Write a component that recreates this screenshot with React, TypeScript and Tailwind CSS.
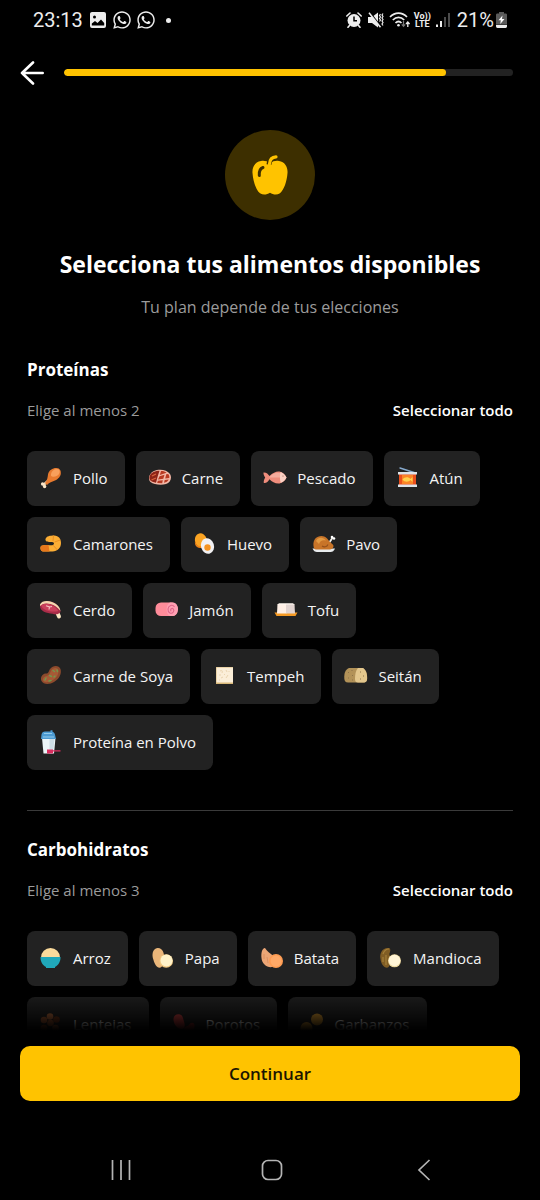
import type { ReactNode } from "react";
import { FaWhatsapp } from "react-icons/fa";

type Food = { name: string; icon: ReactNode };

const proteins: Food[] = [
  {
    name: "Pollo",
    icon: (
      <>
        <path d="M9 15 5 18.500" stroke="#f3d9b8" strokeWidth="2.600" strokeLinecap="round" />
        <circle cx="3.600" cy="18" r="1.700" fill="#fbe6c8" />
        <circle cx="5.600" cy="20.500" r="1.700" fill="#fbe6c8" />
        <path d="M6 17C8.500 14 8.500 11.500 9 8.500 9.800 4 14 1.800 17.500 2c3.500.2 4.800 3 4.300 6-.6 3.400-3.800 5.800-7 7-2.500.9-4.800 1.900-6.800 4z" fill="#e87b2f" />
        <path d="M12 8c.5-3 3-5 6-5 2.500 0 3.200 2 2.500 4-1 2.600-3.500 3.500-6 3.800-2 .2-2.900-1-2.500-2.800z" fill="#f8a05c" />
      </>
    ),
  },
  {
    name: "Carne",
    icon: (
      <>
        <path d="M6 5c5-2.500 13-1.500 16 3 2.300 3.800.5 8.500-4 10-4.500 1.300-12 .8-15.500-2C-.5 13 1 7.300 6 5z" fill="#f3b7a6" />
        <path d="M5.500 6c2-1 4-1.300 6-1.300L9.800 10 8 16.700c-2.500-.4-5-1.200-6-2.700C.5 11.300 2 7.700 5.500 6z" fill="#8f2417" />
        <path d="M13 5c2-.2 4 .5 5.500 1.700L11.800 9zM11.500 10.300l5-1.600-1.200 4-5.300.8zM9.800 14.800l5-.6-.6 3-5-.2zM18.200 8.200l2-.3c1 1.300 1.400 2.600 1 4.200l-4 .4zM16.700 13.900l4-.4c-1 1.800-2.300 2.900-4.700 3.300z" fill="#b93a22" />
        <path d="m4 10 4-2M3.500 14 8 12" stroke="#d9653f" strokeWidth="1.200" />
      </>
    ),
  },
  {
    name: "Pescado",
    icon: (
      <>
        <path d="M.5 6.500c3-.2 4.500 1.500 6 3.500C10 6.500 13.500 5 16.500 5.500c3 .5 5.500 3 7 6C22 15 18.500 17.500 15.500 17.500c-3.700 0-6.700-1.700-9-4.200-1.500 2.500-3 4-5.700 3.700-.3-2 .5-3.700 1.400-5.400C1.300 10 .3 8.500.5 6.500z" fill="#ef8d7c" />
        <path d="M6 11.500h17C20 8 17 6.500 14 6.700c-3 .1-6 2-8 4.800z" fill="#f6ad9e" />
        <path d="M17.500 6c3 1 4.700 3 6 5.500-1.200 2.400-3 4.400-5.800 5.200-1-3.500-1-7.200-.2-10.700z" fill="#fbd0c3" />
        <circle cx="20" cy="10" r=".6" fill="#8d6257" />
      </>
    ),
  },
  {
    name: "Atún",
    icon: (
      <>
        <path d="m4 2 14 4.500" stroke="#87aacd" strokeWidth="1.400" strokeLinecap="round" />
        <path d="M3 7h17v13H3z" fill="#ea4f1d" />
        <path d="M6 9h11v9H6z" fill="#fb8426" />
        <path d="M6.500 13.500c2-3 6-3 8-.6l2-1.800v4.800l-2-1.800c-2 2.300-6 2.300-8-.6z" fill="#ffd14d" />
        <path d="M2 6h19v2.500H2zM2 18.500h19V21H2z" fill="#dce3e9" />
      </>
    ),
  },
  {
    name: "Camarones",
    icon: (
      <>
        <path d="M6.500 7C7.500 4 11 3.500 15 3.500c5 .2 7 3.500 7 7.500 0 5-3.500 8.300-8.500 8.500H4c-2.500 0-3.500-4.500-1.500-5.700 2.500-1.300 5-.8 8.500-.5 2.500.3 4-.5 4-1.800 0-1.200-1.500-1.500-3.500-1.500-2.500.1-5.500-.5-5-3z" fill="#fcae35" />
        <path d="M2.500 13.800c2-1 4.500-.9 7-.7l1 6.400H4c-2.500 0-3.500-4.500-1.500-5.700z" fill="#e8771b" />
        <path d="M14.500 3.500 14 9M21.300 8l-5.700 2M18.500 18 14 13.200" stroke="#e88b20" strokeWidth=".9" />
      </>
    ),
  },
  {
    name: "Huevo",
    icon: (
      <>
        <ellipse cx="8" cy="8.500" rx="6" ry="7.300" fill="#fba423" transform="rotate(-15 8 8.500)" />
        <path d="M2 9c1 4 4 6 8 5.500-1 2-4 2-6 .5s-2.300-4-2-6z" fill="#ef8218" />
        <ellipse cx="14.500" cy="14" rx="6.500" ry="7.800" fill="#f1f0f2" transform="rotate(-18 14.500 14)" />
        <circle cx="14.500" cy="15.500" r="3.200" fill="#f59321" />
      </>
    ),
  },
  {
    name: "Pavo",
    icon: (
      <>
        <path d="M.5 16.500h22.500c-1 2.500-2.500 3.500-4.500 3.500H5c-2 0-3.500-1-4.500-3.500z" fill="#e8ebed" />
        <path d="m17 11 4-6" stroke="#f2efe9" strokeWidth="1.800" />
        <circle cx="20" cy="5" r="1.300" fill="#fff" />
        <circle cx="22" cy="6.500" r="1.300" fill="#fff" />
        <path d="M1.500 14C.8 7.500 4.500 4 9.500 4c4 .2 6 2.500 8 5.500l3.500 3.300c1.500 2-.5 4.700-3 4.700H4c-1.500 0-2.300-1.500-2.500-3.500z" fill="#c87428" />
        <path d="M4 9c2-4 7-4.500 10-.5-3.500-1-6 .2-7 3.500z" fill="#e29a43" />
        <path d="M10 14c2 1.500 5 1 6-1.500" stroke="#95501c" strokeWidth="1.100" />
      </>
    ),
  },
  {
    name: "Cerdo",
    icon: (
      <>
        <path d="m18 14 2 4.500" stroke="#fae7c4" strokeWidth="4" strokeLinecap="round" />
        <path d="M1 7c1.500-4 8-5 13.500-2.500 4 1.800 7 5.500 7 9.500-2 2.800-5 2.700-8 1.800C8 14.800.5 14 1 7z" fill="#a82c48" />
        <path d="M1 6.500C2.500 3 8 2.200 13 4c4.500 1.500 8 5 8.500 9-3-3.500-6-6-10-7C7.500 5 4 5.200 1 8z" fill="#f3d8b0" />
        <path d="M2 7.500c3-2.300 7-2 10.500-.5 3.500 1.500 5.300 3.800 7 6-6 1.500-15 .5-17.500-5.500z" fill="#c9405b" />
        <path d="M7 7.800 10.500 9 10 11.500M10.500 9l2.500-.5" stroke="#f7c0c0" strokeWidth="1.200" />
      </>
    ),
  },
  {
    name: "Jamón",
    icon: (
      <>
        <rect x=".5" y="4.500" width="22" height="13.500" rx="5.500" fill="#ff8c9a" />
        <path d="M15 4.500h3a5 6.700 0 0 1 0 13.500h-3c-4.500-2-4.500-11.500 0-13.500z" fill="#ff9fb2" />
        <path d="M19.500 9c-2-3-6-1.700-6.500 2-.3 4 3.500 5.500 5.300 3 1.400-2-.3-4.300-2-3.300-1 .7-.8 2 0 2.500" stroke="#df6688" strokeWidth="1.100" />
      </>
    ),
  },
  {
    name: "Tofu",
    icon: (
      <>
        <path d="M.5 14.500h23L21.500 18h-19z" fill="#f59a24" />
        <path d="M3.500 6h9v9.500H3z" fill="#fff0e6" />
        <path d="M12 6h8.500l.5 9.500h-9z" fill="#e2d4d0" />
        <path d="M3.500 6.500 5 5.200h14l1.500 1.300z" fill="#fff8f1" />
      </>
    ),
  },
  {
    name: "Carne de Soya",
    icon: (
      <>
        <path d="M11 5c3-4 9-4 10.500 0 1.500 5-1.500 10-6.500 13-4 2.500-10.500 3-12.500-1-1.500-3.500.5-7 4-7.500 3 .5 3-2 4.500-4.500z" fill="#8d4a2c" />
        <path d="M13.500 5c2.500-2 6-1 6 2 0 4-2.500 7.500-6.500 9.500-3.500 2-8 2.500-9 0-.7-2 1-4 3.500-4.500 4-.7 3.500-5 6-7z" fill="#a75a36" />
        <path d="m14 6.500 1.500 1M10.500 11.500l2 1M7 14l-1 2M15 13l1-1M18 6l.5 1.500M10 17l2-.5" stroke="#71974b" strokeWidth="1.500" strokeLinecap="round" />
      </>
    ),
  },
  {
    name: "Tempeh",
    icon: (
      <>
        <path d="M3 3h17v17H3z" fill="#d9b878" />
        <path d="M3.500 3.500H20V18.500H3.500z" fill="#fbeed8" />
        <path d="M7 7c2-1 3 0 2 2M13 6l1 2M15 11l-2 3M8 14l2-1M6 11h2M11 10l1 1M6 16h1M16 7v1" stroke="#ead4b0" strokeWidth="1" />
      </>
    ),
  },
  {
    name: "Seitán",
    icon: (
      <>
        <path d="M5 4h14c3.500 2.500 4.500 7 4 12-.5 2-2 2.500-4 2.500H4c-2.500 0-3.500-1.500-3.700-4C0 10 1 5.500 5 4z" fill="#b29258" />
        <path d="M14 4h5c3.500 2.500 4.500 7 4 12-.5 2-2 2.500-4 2.500h-5c-2 0-3-1-3-3.500 0-4 .5-8.500 3-11z" fill="#e3c78d" />
        <path d="m4 8 1 1M8 6v1M8 11l1 1M4 14h1M8 16h1M16 8h1M19 12h1M16 15h1" stroke="#8d7349" strokeWidth="1" />
      </>
    ),
  },
  {
    name: "Proteína en Polvo",
    icon: (
      <>
        <path d="M3 8h13.500l-1.500 15.500H4.500z" fill="#edf5f8" />
        <path d="M10.500 9h5l-1.500 14.500h-3.500z" fill="#cddde5" />
        <path d="M2.500 4.500C3 2.500 4 1.500 6 1.500h5.500V.2h2v1.500c1.500.5 2.300 1.500 2.500 3L17 9H2z" fill="#4c9bd3" />
        <path d="M5 3.500h8M4 7h11" stroke="#92caeb" strokeWidth="1" />
        <path d="M8 19.500h6v.7h7.500v1.400H14v2H8z" fill="#dc2e60" />
      </>
    ),
  },
];

const carbs: Food[] = [
  {
    name: "Arroz",
    icon: (
      <>
        <path d="M2 11.500a9.500 9.500 0 0 1 19 0z" fill="#fbdb9c" />
        <path d="M1.500 11h20c.2 4.500-2 8-5.500 10v1H7v-1c-3.500-2-5.700-5.500-5.500-10z" fill="#20a8ba" />
      </>
    ),
  },
  {
    name: "Papa",
    icon: (
      <>
        <path d="M2.500 14C.5 9 1.500 2.500 6.500 2c5-.4 7 5 6.500 10 0 4.500-1 9.500-4.500 9.700-3 0-5-4-6-7.700z" fill="#eab67a" />
        <circle cx="15.200" cy="15" r="6.800" fill="#f1c880" />
        <circle cx="15.500" cy="14.500" r="6" fill="#fff2c9" />
      </>
    ),
  },
  {
    name: "Batata",
    icon: (
      <>
        <path d="M1.500 12C1 7 2 2.500 5 2c2 3.500 5 5 8.500 8l-1 11C7 22 2 18 1.500 12z" fill="#eca676" />
        <path d="M4 8v5M7 11l1 6" stroke="#d98b5c" strokeWidth=".8" />
        <circle cx="16" cy="15" r="7" fill="#ff9c52" />
        <circle cx="16" cy="15" r="5.500" fill="#ffa967" />
      </>
    ),
  },
  {
    name: "Mandioca",
    icon: (
      <>
        <path d="M1.500 13C0 7 4 1 10 2c2 .5 1.300 4 .3 6 2 5 1.700 13-2.300 13.800-3.500-.5-6-4-6.500-8.800z" fill="#805d24" />
        <path d="M4 8c1-3 3-5 6-5M4 11v5M7 9v10" stroke="#a5803a" strokeWidth="1.200" />
        <circle cx="15.500" cy="14.800" r="6.500" fill="#e9d49a" />
        <circle cx="15.500" cy="14.500" r="5.800" fill="#fff4d6" />
      </>
    ),
  },
  {
    name: "Lentejas",
    icon: (
      <>
        <circle cx="11" cy="4.500" r="3.300" fill="#a76239" />
        <circle cx="5" cy="8" r="3.300" fill="#9d5630" />
        <circle cx="17.500" cy="7.500" r="3.300" fill="#6c3319" />
        <circle cx="11.500" cy="11" r="3.300" fill="#8f4d2a" />
        <circle cx="5" cy="16" r="3.300" fill="#84401f" />
        <circle cx="16.500" cy="16" r="3.300" fill="#9d5630" />
      </>
    ),
  },
  {
    name: "Porotos",
    icon: (
      <>
        <path d="M1.500 8C1 4 4 1.500 8 2.500c3 1 3 4 4 7s1.500 7-2 7.500C6 17.500 2 13 1.500 8z" fill="#b83b3b" />
        <path d="M12 17c0-3 3-2 5-4 1.500-3 5-3 5.500 0 .5 4-2.500 8-6 8.500-2.500.3-4.500-1.500-4.500-4.500z" fill="#8f2626" />
      </>
    ),
  },
  {
    name: "Garbanzos",
    icon: (
      <>
        <circle cx="17" cy="7.500" r="6" fill="#c98f2c" />
        <circle cx="6.500" cy="16" r="6" fill="#c98f2c" />
      </>
    ),
  },
];

function StatusBar() {
  return (
    <div className="flex h-10 shrink-0 items-center justify-between pr-[33px] pl-[33px] font-['Roboto',sans-serif] text-[20px] text-[#ededed]">
      <div className="flex items-center">
        <span>23:13</span>
        <svg viewBox="0 0 16 16" className="ml-[7px] size-4" aria-hidden="true">
          <path fillRule="evenodd" d="M2 0h12a2 2 0 0 1 2 2v12a2 2 0 0 1-2 2H2a2 2 0 0 1-2-2V2C0 .9.900 0 2 0zM4.500 3.500a1.500 1.500 0 1 0 0 3 1.500 1.500 0 0 0 0-3zM1.800 13.500h12.400V11L11 7.500 7.500 11 5 9l-3.200 2.500z" fill="#ededed" />
        </svg>
        <FaWhatsapp className="ml-1.5 size-5" />
        <FaWhatsapp className="ml-1 size-5" />
        <span className="ml-2.5 size-[5px] rounded-full bg-[#ededed]" />
      </div>
      <div className="flex items-center">
        <svg viewBox="0 0 16 16" className="size-4" aria-hidden="true">
          <circle cx="8" cy="8.500" r="6.500" fill="#ededed" />
          <path d="M.8 4 4 1M15.200 4 12 1M3.500 13.500 2 15.300M12.500 13.500l1.500 1.800" stroke="#ededed" strokeWidth="1.600" strokeLinecap="round" />
          <path d="M8 4.500v4.300h3" stroke="#000" strokeWidth="1.500" fill="none" />
        </svg>
        <svg viewBox="0 0 16 16" className="ml-1.5 size-4" aria-hidden="true">
          <path d="M0 5h4l6-4.500v15L4 11H0z" fill="#ededed" />
          <path d="M2 .500 13.500 15.500" stroke="#000" strokeWidth="1.500" />
          <path d="M1 .800 12.500 15.300" stroke="#ededed" strokeWidth="1.500" />
          <path d="m12.500 2-1 1.500 1 1.500-1 1.500 1 1.500-1 1.500M15 1.500l-1 1.500 1 1.500-1 1.500 1 1.500-1 1.500 1 1.500-1 1.500 1 1.500" stroke="#ededed" strokeWidth="1.200" fill="none" />
        </svg>
        <svg viewBox="0 0 21 16" className="ml-[5px] h-4 w-[21px]" fill="none" aria-hidden="true">
          <path d="M1 5C6-.2 13-.2 18 5M3.800 8c3.500-3.500 8-3.500 11.400 0M6.500 11c2-2 4-2 6 0" stroke="#ededed" strokeWidth="1.700" />
          <circle cx="9.500" cy="13.300" r="1.300" fill="#ededed" />
          <path d="M14.500 9v5M12.800 12.300l1.700 2 1.700-2" stroke="#777" strokeWidth="1.200" />
          <path d="M18.800 15v-5M17 12l1.800-2 1.800 2" stroke="#ededed" strokeWidth="1.300" />
        </svg>
        <span className="ml-1 flex flex-col text-center text-[9px] leading-[8px] font-bold">
          <span>Vo))</span>
          <span>LTE</span>
        </span>
        <svg viewBox="0 0 15 16" className="ml-[5px] h-4 w-[15px]" aria-hidden="true">
          <path d="M0 12.500h2V15H0zM4 9h2v6H4z" fill="#ededed" />
          <path d="M8 5h2v10H8zM12 1h2v14h-2z" fill="#4b4b4b" />
        </svg>
        <span className="ml-1.5">21%</span>
        <svg viewBox="0 0 11 16" className="ml-0.5 h-4 w-[11px]" aria-hidden="true">
          <path d="M3 0h5v1.500h1.500c1 0 1.500.5 1.500 1.500v9H0V3c0-1 .5-1.500 1.500-1.500H3z" fill="#5a5a5a" />
          <path d="M0 12.800h11V14c0 1-.5 2-1.500 2h-8C.5 16 0 15 0 14z" fill="#ededed" />
          <path d="m6.500 3.500-4 4.700h2.300L4.300 12l4.200-5H6z" fill="#fff" />
        </svg>
      </div>
    </div>
  );
}

function AppleIcon() {
  return (
    <svg viewBox="0 0 36 40" className="h-10 w-9" fill="none" aria-hidden="true">
      <path d="M18 8C15 6 12 5.500 9 6 3 7 0 12 .5 18c.5 8 3.500 17 7.500 20.300 3.500 2.200 7 1.200 10-.5 3 1.700 6.500 2.700 10 .5 4-3.300 7-12.300 7.500-20.300C36 12 33 7 27 6c-3-.5-6 0-9 2z" fill="#ffc300" />
      <path d="M17 9.500C17.500 4.500 20 1.800 24 1.700" stroke="#3d2f00" strokeWidth="5" />
      <path d="M17.500 9C17.800 4.500 20 2 24 1.800" stroke="#ffc300" strokeWidth="3.200" strokeLinecap="round" />
      <path d="M7.300 20.500c-.3-4 .7-7 3.700-8" stroke="#3d2f00" strokeWidth="3" strokeLinecap="round" />
    </svg>
  );
}

function FoodSection({ title, hint, foods }: { title: string; hint: string; foods: Food[] }) {
  return (
    <section>
      <h2 className="text-[17px] leading-6 font-bold">{title}</h2>
      <div className="mt-[17px] flex items-center justify-between text-[15px] leading-[22px]">
        <p className="text-[#9b9b9b]">{hint}</p>
        <button type="button" className="font-semibold">
          Seleccionar todo
        </button>
      </div>
      <div className="mt-[30px] flex flex-wrap gap-[11px]">
        {foods.map((food) => (
          <button
            key={food.name}
            type="button"
            className="flex h-[55px] items-center gap-2.5 rounded-lg bg-[#222222] pr-[17px] pb-px pl-3 text-[15px] text-[#f4f4f4]"
          >
            <svg viewBox="0 0 24 24" className="size-6 shrink-0" fill="none" aria-hidden="true">
              {food.icon}
            </svg>
            {food.name}
          </button>
        ))}
      </div>
    </section>
  );
}

export default function App() {
  return (
    <div className="flex h-screen flex-col bg-black font-['Open_Sans',sans-serif] text-white">
      <StatusBar />
      <header className="flex h-[65px] shrink-0 items-center gap-5 pr-[27px] pl-5">
        <button type="button" aria-label="Volver">
          <svg viewBox="0 0 24 24" className="size-6" fill="none" stroke="#fff" strokeWidth="2.600" strokeLinecap="round" strokeLinejoin="round">
            <path d="M22.700 12H2M13 1.500 2 12l11 10.500" />
          </svg>
        </button>
        <div role="progressbar" aria-label="Progreso" aria-valuenow={85} aria-valuemin={0} aria-valuemax={100} className="h-[7px] flex-1 overflow-hidden rounded-full bg-[#222222]">
          <div className="h-full w-[85%] rounded-full bg-[#ffc300]" />
        </div>
      </header>
      <div className="relative min-h-0 flex-1">
        <main className="h-full overflow-y-auto px-[27px] pt-[25px] pb-12 [scrollbar-width:none]">
          <div className="flex flex-col items-center text-center">
            <div className="flex size-[90px] items-center justify-center rounded-full bg-[#3d2f00]">
              <AppleIcon />
            </div>
            <h1 className="mt-[27px] text-[23px] leading-[34px] font-bold">Selecciona tus alimentos disponibles</h1>
            <p className="mt-3.5 text-[16px] leading-6 text-[#9b9b9b]">Tu plan depende de tus elecciones</p>
          </div>
          <div className="mt-[39px]">
            <FoodSection title="Proteínas" hint="Elige al menos 2" foods={proteins} />
          </div>
          <hr className="mt-10 mb-[27px] border-t border-[#3a3a3a]" />
          <FoodSection title="Carbohidratos" hint="Elige al menos 3" foods={carbs} />
        </main>
        <div className="pointer-events-none absolute inset-x-0 bottom-0 h-12 bg-linear-to-b from-transparent to-black to-95%" />
      </div>
      <div className="shrink-0 px-5 pt-[13px]">
        <button type="button" className="h-[55px] w-full rounded-[10px] bg-[#ffc300] text-[17px] font-semibold text-[#1c1500]">
          Continuar
        </button>
      </div>
      <nav className="mt-[38px] flex h-[61px] shrink-0 items-center justify-around pr-10 pl-[45px]">
        <button type="button" aria-label="Recientes">
          <svg viewBox="0 0 22 22" className="size-[22px]" stroke="#b4b4b4" strokeWidth="1.700">
            <path d="M2.500 1v20M11 1v20M19.500 1v20" />
          </svg>
        </button>
        <button type="button" aria-label="Inicio">
          <svg viewBox="0 0 22 22" className="size-[22px]" fill="none" stroke="#b4b4b4" strokeWidth="1.700">
            <rect x="1.500" y="1.500" width="19" height="19" rx="5.500" />
          </svg>
        </button>
        <button type="button" aria-label="Atrás">
          <svg viewBox="0 0 22 22" className="size-[22px]" fill="none" stroke="#b4b4b4" strokeWidth="1.700">
            <path d="M16.500 1 6 11l10.500 10" />
          </svg>
        </button>
      </nav>
    </div>
  );
}
